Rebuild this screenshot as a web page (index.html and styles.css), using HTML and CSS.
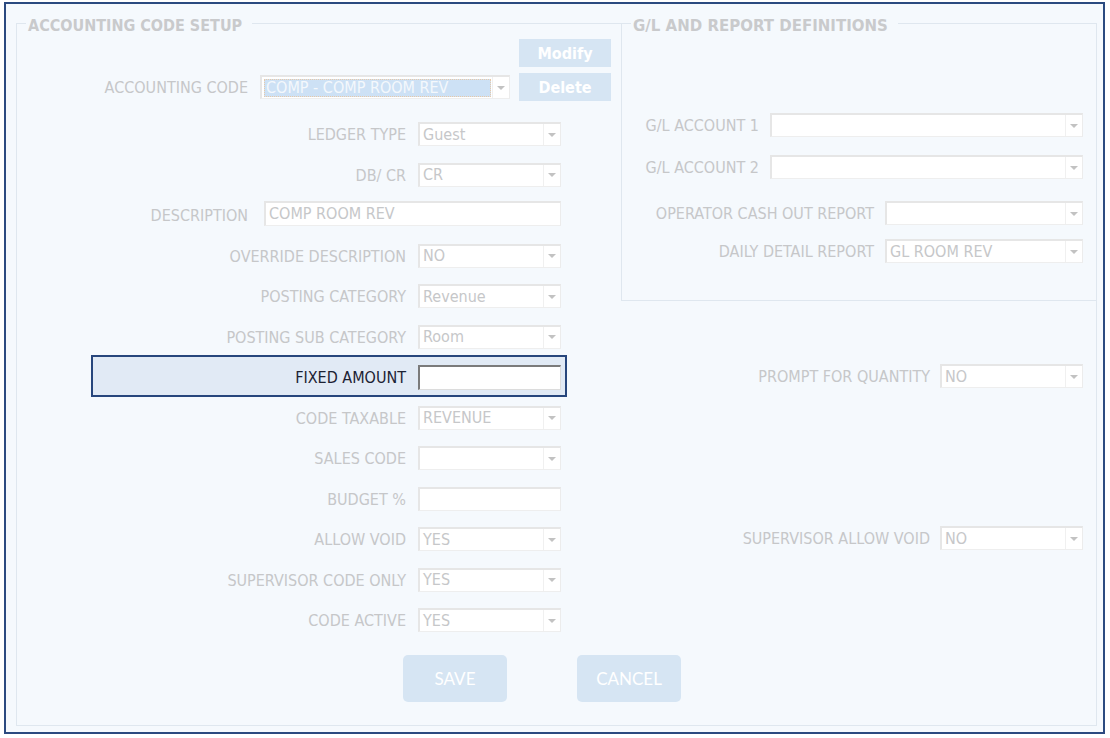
FILE: index.html
```html
<!DOCTYPE html>
<html>
<head>
<meta charset="utf-8">
<link rel="stylesheet" href="styles.css">
</head>
<body>
<div class="frame">
  <fieldset class="setup">
    <legend class="legend-setup">ACCOUNTING CODE SETUP</legend>
    <div class="setup-body">
      <div class="top">
        <button class="btn-small btn-modify">Modify</button>
        <span class="label label-code">ACCOUNTING CODE</span>
        <div class="combo combo-code"><span class="value selected">COMP - COMP ROOM REV</span><span class="arrow"></span></div>
        <button class="btn-small btn-delete">Delete</button>
      </div>

      <div class="grid">
        <div class="field r1"><span class="label">LEDGER TYPE</span><div class="combo"><span class="value">Guest</span><span class="arrow"></span></div></div>
        <div class="field r2"><span class="label">DB/ CR</span><div class="combo"><span class="value">CR</span><span class="arrow"></span></div></div>
        <div class="field field-wide r3"><span class="label">DESCRIPTION</span><div class="text-input"><span class="value">COMP ROOM REV</span></div></div>
        <div class="field r4"><span class="label">OVERRIDE DESCRIPTION</span><div class="combo"><span class="value">NO</span><span class="arrow"></span></div></div>
        <div class="field r5"><span class="label">POSTING CATEGORY</span><div class="combo"><span class="value">Revenue</span><span class="arrow"></span></div></div>
        <div class="field r6"><span class="label">POSTING SUB CATEGORY</span><div class="combo"><span class="value">Room</span><span class="arrow"></span></div></div>
        <div class="field field-active r7"><span class="label">FIXED AMOUNT</span><div class="text-input focus"></div></div>
        <div class="field r8"><span class="label">CODE TAXABLE</span><div class="combo"><span class="value">REVENUE</span><span class="arrow"></span></div></div>
        <div class="field r9"><span class="label">SALES CODE</span><div class="combo"><span class="value"></span><span class="arrow"></span></div></div>
        <div class="field r10"><span class="label">BUDGET %</span><div class="text-input"></div></div>
        <div class="field r11"><span class="label">ALLOW VOID</span><div class="combo"><span class="value">YES</span><span class="arrow"></span></div></div>
        <div class="field r12"><span class="label">SUPERVISOR CODE ONLY</span><div class="combo"><span class="value">YES</span><span class="arrow"></span></div></div>
        <div class="field r13"><span class="label">CODE ACTIVE</span><div class="combo"><span class="value">YES</span><span class="arrow"></span></div></div>

        <div class="side r7"><span class="label">PROMPT FOR QUANTITY</span><div class="combo combo-side"><span class="value">NO</span><span class="arrow"></span></div></div>
        <div class="side r11"><span class="label">SUPERVISOR ALLOW VOID</span><div class="combo combo-side"><span class="value">NO</span><span class="arrow"></span></div></div>
      </div>

      <div class="actions">
        <button class="btn-big">SAVE</button>
        <button class="btn-big">CANCEL</button>
      </div>
    </div>
  </fieldset>

  <fieldset class="gl">
    <legend class="legend-gl">G/L AND REPORT DEFINITIONS</legend>
    <div class="gl-body">
      <div class="gl-row gl-1"><span class="label">G/L ACCOUNT 1</span><div class="combo combo-gl"><span class="value"></span><span class="arrow"></span></div></div>
      <div class="gl-row gl-2"><span class="label">G/L ACCOUNT 2</span><div class="combo combo-gl"><span class="value"></span><span class="arrow"></span></div></div>
      <div class="gl-row gl-3"><span class="label">OPERATOR CASH OUT REPORT</span><div class="combo combo-report"><span class="value"></span><span class="arrow"></span></div></div>
      <div class="gl-row gl-4"><span class="label">DAILY DETAIL REPORT</span><div class="combo combo-report"><span class="value">GL ROOM REV</span><span class="arrow"></span></div></div>
    </div>
  </fieldset>
</div>
</body>
</html>
```

FILE: styles.css
```css
html, body {
  margin: 0;
  padding: 0;
  background: #ffffff;
}

body {
  font-family: "DejaVu Sans Condensed", "DejaVu Sans", sans-serif;
  font-size: 16px;
}

.frame {
  position: relative;
  box-sizing: border-box;
  margin: 2px 0 0 4px;
  width: 1101px;
  height: 732px;
  border: 2px solid #2b4a80;
  background: #f5f9fd;
  padding: 8px 6px 6px 10px;
  display: flex;
  flex-direction: column;
}

fieldset {
  margin: 0;
  padding: 0;
  border: 1px solid #dfe7ef;
  min-width: 0;
}

.setup {
  flex: 1;
}

legend {
  font-weight: bold;
  color: #c9cacc;
  line-height: 16px;
  padding: 6px 10px 0 2px;
  margin-left: 9px;
}

.legend-setup {
  font-family: "DejaVu Sans Condensed", "DejaVu Sans", sans-serif;
  font-size: 16px;
}

.legend-gl {
  font-family: "DejaVu Sans", sans-serif;
  font-size: 15px;
  padding-right: 10px;
}

.setup-body {
  padding: 5px 0 0 76px;
}

/* top: accounting code selector with Modify / Delete */
.top {
  display: grid;
  grid-template-columns: 155px 262px 101px;
  grid-template-rows: 28px 28px;
  row-gap: 6px;
  align-items: center;
}

.btn-small {
  width: 92px;
  height: 28px;
  border: none;
  background: #d6e5f3;
  color: #ffffff;
  font-family: "DejaVu Sans Condensed", "DejaVu Sans", sans-serif;
  font-weight: bold;
  font-size: 16px;
  padding: 0;
  justify-self: end;
}

.btn-modify {
  grid-column: 3;
  grid-row: 1;
}

.btn-delete {
  grid-column: 3;
  grid-row: 2;
}

.label-code {
  grid-column: 1;
  grid-row: 2;
}

.combo-code {
  grid-column: 2;
  grid-row: 2;
  justify-self: end;
  width: 250px;
  height: 25px;
}

.label {
  color: #c6c7c9;
  text-align: right;
  white-space: nowrap;
  line-height: 24px;
  padding-top: 2px;
}

/* generic controls */
.combo, .text-input {
  box-sizing: border-box;
  height: 24px;
  background: #ffffff;
  border-style: solid;
  border-width: 2px 1px 1px 2px;
  border-color: #e6e6e6 #ececec #eeeeee #e6e6e6;
  display: flex;
  align-items: center;
  overflow: hidden;
}

.value {
  flex: 1;
  color: #c6c7c9;
  padding-left: 3px;
  line-height: 20px;
  white-space: nowrap;
  font-size: 16px;
}

.value.selected {
  flex: 0 0 auto;
  width: 227px;
  box-sizing: border-box;
  margin-left: 2px;
  height: 18px;
  line-height: 17px;
  padding-left: 2px;
  background: #cde1f5;
  color: #f4f8fc;
  outline: 1px dotted #e8c9a8;
  outline-offset: -1px;
}

.combo-code .arrow {
  margin-left: auto;
}

.arrow {
  position: relative;
  width: 17px;
  height: 100%;
  box-sizing: border-box;
  border-left: 1px solid #f0f0f0;
  background: #ffffff;
  flex: 0 0 auto;
}

.arrow::after {
  content: "";
  position: absolute;
  left: 4px;
  top: 50%;
  margin-top: -2px;
  border-left: 4px solid transparent;
  border-right: 4px solid transparent;
  border-top: 4px solid #c2c2c2;
}

/* main form grid */
.grid {
  margin-top: 20px;
  display: grid;
  grid-template-columns: 468px 522px;
  column-gap: 0;
  grid-template-rows: repeat(13, 24px);
  row-gap: 16.5px;
}

.field {
  grid-column: 1;
  display: grid;
  grid-template-columns: 313px 143px;
  column-gap: 12px;
  align-items: center;
}

.field-wide {
  grid-template-columns: 155px 297px;
  column-gap: 16px;
}

.field-wide .text-input {
  height: 25px;
  margin-top: -3px;
}

.field-active {
  margin: -9px -6px -9px -2px;
  padding: 7px 4px 7px 0;
  border: 2px solid #27467c;
  background: #e1eaf5;
}

.field-active .label {
  color: #1c2233;
}

.text-input.focus {
  height: 25px;
  border-width: 2px 1px 1px 2px;
  border-color: #7b7b7b #dcdcdc #dcdcdc #7b7b7b;
}

.side {
  grid-column: 2;
  display: flex;
  justify-content: flex-end;
  align-items: center;
  gap: 10px;
}

.combo-side {
  width: 143px;
}

.r1 { grid-row: 1; }
.r2 { grid-row: 2; }
.r3 { grid-row: 3; }
.r4 { grid-row: 4; }
.r5 { grid-row: 5; }
.r6 { grid-row: 6; }
.r7 { grid-row: 7; }
.r8 { grid-row: 8; }
.r9 { grid-row: 9; }
.r10 { grid-row: 10; }
.r11 { grid-row: 11; }
.r12 { grid-row: 12; }
.r13 { grid-row: 13; }

/* save / cancel */
.actions {
  margin-top: 24px;
  padding-left: 310px;
  display: flex;
  gap: 70px;
}

.btn-big {
  width: 104px;
  height: 47px;
  border: none;
  border-radius: 5px;
  background: #d6e5f3;
  color: #ffffff;
  font-family: Lato, "Open Sans", sans-serif;
  font-size: 17px;
  padding: 0;
}

/* G/L panel, laid over the top-right of the setup panel */
.gl {
  position: absolute;
  left: 615px;
  top: 8px;
  width: 476px;
  height: 289px;
  box-sizing: border-box;
  background: #f5f9fd;
}

.gl-body {
  padding: 79px 13px 0 0;
  display: flex;
  flex-direction: column;
}

.gl-row {
  display: flex;
  justify-content: flex-end;
  align-items: center;
  gap: 11px;
  height: 24px;
}

.gl-2 { margin-top: 18px; }
.gl-3 { margin-top: 22px; }
.gl-4 { margin-top: 14px; }

.combo-gl {
  width: 313px;
}

.combo-report {
  width: 198px;
}
```
